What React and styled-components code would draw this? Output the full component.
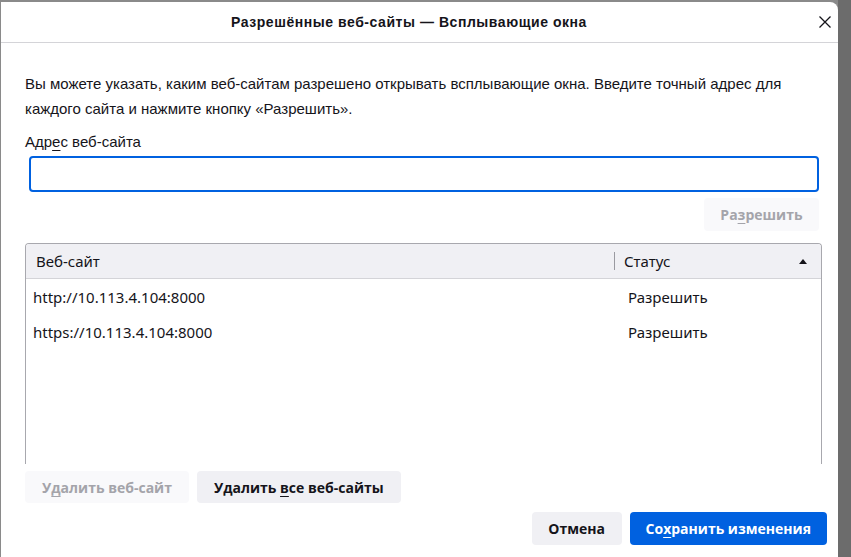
import React from "react";
import styled, { createGlobalStyle } from "styled-components";

const Global = createGlobalStyle`
  html, body { margin: 0; padding: 0; background: #7c7c7c; }
  body { width: 851px; height: 557px; overflow: hidden; }
  * { box-sizing: border-box; }
`;

const Frame = styled.div`
  display: flex;
  width: 851px;
  height: 557px;
  padding: 2px 13px 0 1px;
  background: linear-gradient(to right, #8a8a8a 0, #8a8a8a 838px, #6c6c6c 838px);
`;

const Dialog = styled.div`
  flex: 1;
  display: flex;
  flex-direction: column;
  background: #ffffff;
  border-top-right-radius: 8px;
  font-family: "Liberation Sans", Arial, sans-serif;
  color: #15141a;
`;

const Header = styled.div`
  display: flex;
  align-items: center;
  height: 41px;
  border-bottom: 1px solid #d4d4d8;
  flex-shrink: 0;
`;

const Title = styled.h1`
  flex: 1;
  margin: 0;
  text-align: center;
  font-size: 14px;
  font-weight: 700;
  letter-spacing: 0.55px;
`;

const Close = styled.button`
  width: 16px;
  height: 16px;
  margin-right: 5px;
  padding: 0;
  border: 0;
  background: transparent;
  display: flex;
  align-items: center;
  justify-content: center;
`;

const Body = styled.div`
  flex: 1;
  display: flex;
  flex-direction: column;
  padding: 28px 15px 0 24px;
`;

const Description = styled.p`
  margin: 0;
  font-size: 15px;
  line-height: 25px;
`;

const Label = styled.label`
  margin-top: 11px;
  font-size: 15px;
  line-height: 20px;
`;

const Input = styled.input`
  margin: 4px 4px 0 4px;
  height: 36px;
  border: 2px solid #0061e0;
  border-radius: 4px;
  outline: none;
  font-size: 15px;
  padding: 0 8px;
`;

const Row = styled.div`
  display: flex;
  gap: ${(p) => p.$gap || 8}px;
  justify-content: ${(p) => p.$justify || "flex-start"};
  margin-top: ${(p) => p.$mt || 0}px;
  margin-right: ${(p) => p.$mr || 0}px;
`;

const Button = styled.button`
  height: ${(p) => p.$h || 33}px;
  padding: 0 ${(p) => p.$px || 16}px;
  border: 0;
  border-radius: 4px;
  font-family: "Open Sans", "Noto Sans", sans-serif;
  font-size: 14px;
  font-weight: 700;
  background: ${(p) =>
    p.$variant === "primary" ? "#0061e0" : p.$disabled ? "#f9f9fb" : "#f0f0f4"};
  color: ${(p) =>
    p.$variant === "primary" ? "#ffffff" : p.$disabled ? "#a4a4aa" : "#15141a"};
`;

const Tree = styled.div`
  margin-top: 12px;
  margin-right: 1px;
  height: 221px;
  border: 1px solid #a8a8ae;
  border-bottom: 0;
  border-radius: 4px 4px 0 0;
  overflow: hidden;
  font-family: "Noto Sans", "Open Sans", sans-serif;
  font-size: 15px;
`;

const TreeHead = styled.div`
  display: grid;
  grid-template-columns: 588px 1fr;
  height: 35px;
  background: #f0f0f4;
  border-bottom: 1px solid #d4d4d8;
`;

const HeadCell = styled.div`
  display: flex;
  align-items: center;
  justify-content: space-between;
  padding: 0 ${(p) => (p.$last ? 14 : 0)}px 0 10px;
  ${(p) =>
    p.$last
      ? `position: relative;
  &::before { content: ""; position: absolute; left: 0; top: 8px; bottom: 8px; width: 1px; background: #9a9aa0; }`
      : ""}
`;

const SortArrow = styled.span`
  width: 0;
  height: 0;
  border-left: 4px solid transparent;
  border-right: 4px solid transparent;
  border-bottom: 5px solid #15141a;
`;

const TreeRow = styled.div`
  display: grid;
  grid-template-columns: 588px 1fr;
  height: 35px;
  align-items: center;
`;

const Cell = styled.div`
  padding-left: ${(p) => (p.$last ? 14 : 7)}px;
`;

const U = styled.span`
  text-decoration: underline;
  text-underline-offset: 3px;
`;

export default function App() {
  return (
    <>
      <Global />
      <Frame>
        <Dialog>
          <Header>
            <Title>Разрешённые веб-сайты — Всплывающие окна</Title>
            <Close aria-label="Закрыть">
              <svg width="14" height="14" viewBox="0 0 14 14">
                <path d="M1.5 1.5 L12.5 12.5 M12.5 1.5 L1.5 12.5" stroke="#15141a" strokeWidth="1.3" />
              </svg>
            </Close>
          </Header>
          <Body>
            <Description>
              Вы можете указать, каким веб-сайтам разрешено открывать всплывающие окна. Введите точный адрес для
              каждого сайта и нажмите кнопку «Разрешить».
            </Description>
            <Label>
              Адр<U>е</U>с веб-сайта
            </Label>
            <Input />
            <Row $justify="flex-end" $mt={6} $mr={4}>
              <Button $disabled $px={16.5}>
                Ра<U>з</U>решить
              </Button>
            </Row>
            <Tree>
              <TreeHead>
                <HeadCell>Веб-сайт</HeadCell>
                <HeadCell $last>
                  Статус
                  <SortArrow />
                </HeadCell>
              </TreeHead>
              <TreeRow>
                <Cell>http://10.113.4.104:8000</Cell>
                <Cell $last>Разрешить</Cell>
              </TreeRow>
              <TreeRow>
                <Cell>https://10.113.4.104:8000</Cell>
                <Cell $last>Разрешить</Cell>
              </TreeRow>
            </Tree>
            <Row $mt={7}>
              <Button $disabled $h={32} $px={17}>
                У<U>д</U>алить веб-сайт
              </Button>
              <Button $h={32} $px={17}>
                Удалить <U>в</U>се веб-сайты
              </Button>
            </Row>
            <Row $justify="flex-end" $mt={9} $mr={-4}>
              <Button $px={16.5}>Отмена</Button>
              <Button $variant="primary">
                Со<U>х</U>ранить изменения
              </Button>
            </Row>
          </Body>
        </Dialog>
      </Frame>
    </>
  );
}
